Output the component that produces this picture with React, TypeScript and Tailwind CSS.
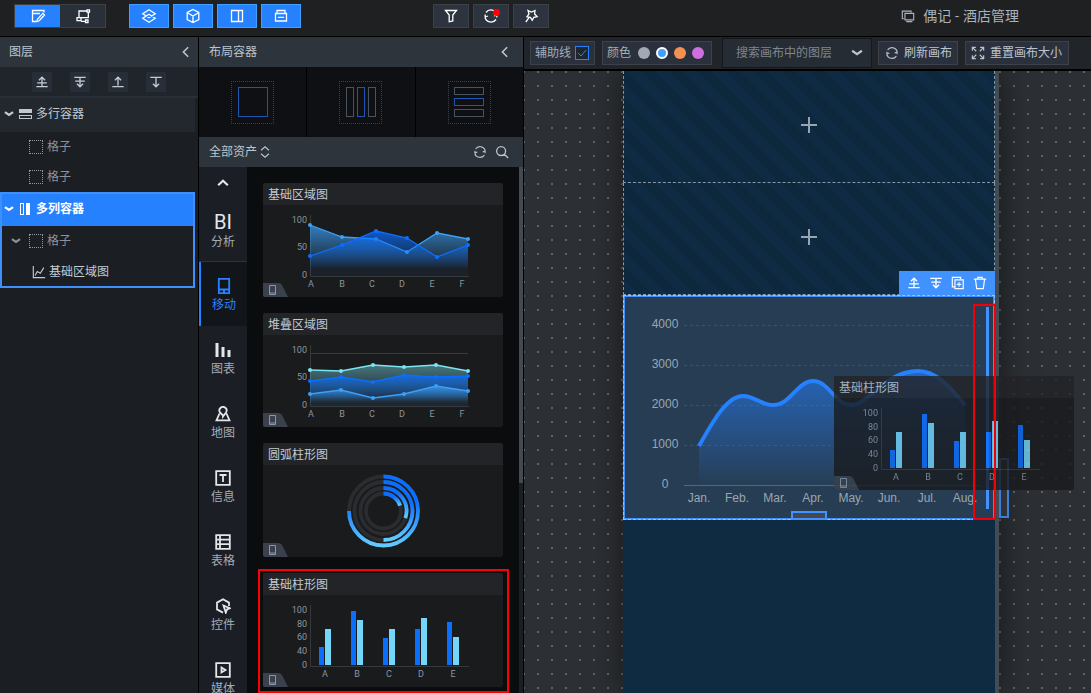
import React from "react";
import clsx from "clsx";

interface IconProps {
  d: string;
  size?: number;
  width?: number;
  className?: string;
}

const Icon: React.FC<IconProps> = ({ d, size = 16, width = 1.3, className }) => (
  <svg
    width={size}
    height={size}
    viewBox="0 0 16 16"
    fill="none"
    stroke="currentColor"
    strokeWidth={width}
    className={clsx("shrink-0", className)}
    aria-hidden="true"
  >
    <path d={d} />
  </svg>
);

const paths = {
  edit: "M14 4.5V2.5H2.5V13.5H6M2.5 5.5H10M14.5 7L9.2 12.8L6.8 13.6L7.4 11.2L12.8 5.4Z",
  flow: "M4 9.5V3H12M13.300 4V9.700H6M2 9.700H6V12.700H2ZM6 13.300H10.500M12 1.800H14.500V4.200H12ZM10.500 12H13V14.500H10.500Z",
  layers: "M8 1.8L14.200 5.700L8 9.700L1.800 5.700ZM8 6.300L14.200 10.300L8 14.200L1.800 10.300Z",
  cube: "M8 1.5L13.8 4.5V11.5L8 14.5L2.2 11.5V4.5ZM2.5 4.8L8 8L13.5 4.8M8 8V14.5",
  panel: "M2.5 2.5H13.5V13.5H2.5ZM9.5 2.5V13.5",
  drawer: "M4 5.500V2.500H12V5.500M2.500 5.500H13.500V13H2.500ZM5 9.300H11",
  filter: "M2.5 2.5H13.5L9.8 7V13L6.2 13.8V7Z",
  sync: "M14 6.5A6.2 6.2 0 0 0 3 4.5M2 9.5A6.2 6.2 0 0 0 13 11.5M2.2 9.5V6.5M13.8 6.5V9.5M2.2 9L5 8M13.8 7L11 8",
  wand: "M5 2.5L8.5 4L12 2.5L11.6 6L14.2 8.6L10.8 9.4L9.2 12.2L7.4 9.4L4 8.8L6 6ZM6 9.600L2.8 14",
  copy: "M3 11H1.5V2.5H11.5V4M4.5 5H14.5V12.5H4.5ZM6 14.5H13",
  moveUp: "M8 13V2.5M4.5 6L8 2.5L11.5 6M2.5 9H13.5M1.5 13.3H14.5",
  moveDown: "M8 3V13.5M4.5 10L8 13.5L11.5 10M1.5 2.7H14.5M2.5 7H13.5",
  toTop: "M8 12V2.5M4.5 6L8 2.5L11.5 6M1.5 13.3H14.5",
  toBottom: "M8 3V13.5M4.5 10L8 13.5L11.5 10M1.5 2.7H14.5",
  left: "M10.5 2.5L5 8L10.5 13.5",
  caret: "M1.500 5L8 9.500L14.500 5",
  up: "M2.5 10.5L8 5.5L13.5 10.5",
  sort: "M3.500 6L8 2L12.500 6M3.500 10L8 14L12.500 10",
  search: "M7 1.8A5 5 0 1 0 7 12A5 5 0 1 0 7 1.8M10.7 10.5L15 14.8",
  expand: "M1.5 5.5V1.5H5.5M1.5 1.5L6 6M10.5 1.5H14.5V5.5M14.5 1.5L10 6M1.5 10.5V14.5H5.5M1.5 14.5L6 10M14.5 10.5V14.5H10.5M14.5 14.5L10 10",
  plus: "M8 0V16M0 8H16",
  duplicate: "M4 12.5H1.5V1.5H11V3.5M4.5 4.5H14V14.5H4.5ZM9.2 7V12M6.7 9.5H11.7",
  trash: "M1 3.5H15M5.5 3.5V1.5H10.5V3.5M2.8 3.5L4.2 14.5H11.8L13.2 3.5",
  phone: "M2.800 .800H13.200V15.200H2.800ZM3 11.500H13M7 13.400H9",
  bars: "M2 15V1M8 15V5M14 15V8",
  map: "M8 9.5L5 6.5A3.6 3.6 0 1 1 11 6.5L8 10.5ZM4.5 7.5L1.5 14.3H14.5L11.5 7.5",
  info: "M1.2 1.2H14.8V14.8H1.2ZM4.5 5H11.5M8 5V12",
  table: "M1.2 1.2H14.8V14.8H1.2ZM5 1.2V14.8M1.2 5.7H14.8M1.2 10.2H14.8",
  widget: "M8 14.6L2 11.4V4.6L8 1.2L14 4.6V8M8.5 7.5L14.8 10.2L12 11.4L10.8 14.6Z",
  media: "M1.2 1.2H14.8V14.8H1.2ZM6.5 5.5L10.5 8L6.5 10.5Z",
  area: "M1.5 1V14.5H15M3.5 12L6 7.5L9.5 9.5L13.5 3",
};

const BLUE = "#0a6eff";
const SKY = "#3aa0f8";
const CYAN = "#74d6f8";

const toLine = (xs: number[], ys: number[]) => xs.map((x, i) => `${x},${ys[i]}`).join(" ");

interface AxisProps {
  xs: number[];
  names: string;
  ticks: [string, number][];
}

const Axis: React.FC<AxisProps> = ({ xs, names, ticks }) => (
  <g>
    <path d="M47.5 10V71.5H206" fill="none" stroke="#35383c" />
    <g fill="#8e959d" fontSize="9">
      {ticks.map(([label, y]) => (
        <text key={label} x="44" y={y + 3} textAnchor="end">
          {label}
        </text>
      ))}
      {names.split("").map((name, i) => (
        <text key={name} x={xs[i]} y="82" textAnchor="middle">
          {name}
        </text>
      ))}
    </g>
  </g>
);

interface SeriesProps {
  id: string;
  xs: number[];
  ys: number[];
  color: string;
  opacity?: number;
}

const Series: React.FC<SeriesProps> = ({ id, xs, ys, color, opacity = 0.75 }) => (
  <g>
    <linearGradient id={id} x1="0" x2="0" y1="0" y2="1">
      <stop offset="0" stopColor={color} stopOpacity={opacity} />
      <stop offset="0.85" stopColor={color} stopOpacity="0.03" />
    </linearGradient>
    <polygon points={`${xs[0]},71 ${toLine(xs, ys)} ${xs[xs.length - 1]},71`} fill={`url(#${id})`} />
    <polyline points={toLine(xs, ys)} fill="none" stroke={color} strokeWidth="1.3" />
    {xs.map((x, i) => (
      <circle key={x} cx={x} cy={ys[i]} r="2" fill={color} />
    ))}
  </g>
);

const nameXs = [48, 79, 109, 139, 169, 199];
const shortTicks: [string, number][] = [["100", 15], ["50", 42], ["0", 70]];

const AreaChart = () => {
  const xs = [47, 79, 113, 144, 174, 205];
  return (
    <>
      <Axis xs={nameXs} names="ABCDEF" ticks={shortTicks} />
      <Series id="area-sky" xs={xs} ys={[20, 32, 34, 47, 28, 34]} color={SKY} />
      <Series id="area-blue" xs={xs} ys={[51, 40, 26, 33, 52, 40]} color={BLUE} />
    </>
  );
};

const StackedChart = () => {
  const xs = [47, 78, 110, 141, 173, 205];
  return (
    <>
      <path d="M47 18.5H205" stroke="#35383c" />
      <Axis xs={nameXs} names="ABCDEF" ticks={shortTicks} />
      <Series id="stack-cyan" xs={xs} ys={[35, 36, 30, 32, 30, 36]} color="#7be4f4" opacity={0.45} />
      <Series id="stack-blue" xs={xs} ys={[46, 42, 47, 40, 42, 41]} color={BLUE} />
      <Series id="stack-sky" xs={xs} ys={[59, 55, 63, 59, 51, 56]} color={SKY} />
    </>
  );
};

const rings = [
  { r: 34.5, share: 0.75 },
  { r: 29, share: 0.5 },
  { r: 23, share: 0.3 },
  { r: 17.5, share: 0.2 },
];

const RingChart = () => (
  <g transform="translate(120.5 46)" fill="none" strokeWidth="3.8">
    {rings.map(({ r, share }) => {
      const a = share * Math.PI * 2;
      const x = r * Math.sin(a);
      const y = -r * Math.cos(a);
      return (
        <g key={r}>
          <linearGradient
            id={`ring-${r}`}
            gradientUnits="userSpaceOnUse"
            x1="0"
            x2="0"
            y1={share < 0.5 ? -r * 0.8 : -r * 0.3}
            y2={share > 0.5 ? r : y}
          >
            <stop offset="0" stopColor={BLUE} />
            <stop offset="1" stopColor="#62ccff" />
          </linearGradient>
          <circle r={r} stroke="#2b2c2f" />
          <path d={`M0 ${-r}A${r} ${r} 0 ${share > 0.5 ? 1 : 0} 1 ${x} ${y}`} stroke={`url(#ring-${r})`} />
        </g>
      );
    })}
  </g>
);

const bars = [
  [52, 34],
  [16, 25],
  [43, 34],
  [34, 23],
  [27, 42],
];

const BarChart = () => (
  <>
    <Axis
      xs={[62, 94, 126, 158, 190]}
      names="ABCDE"
      ticks={[["100", 15], ["80", 29], ["60", 42], ["40", 56], ["0", 70]]}
    />
    {bars.map(([a, b], i) => (
      <g key={i}>
        <rect x={56 + i * 32} y={a} width="5" height={70 - a} fill={BLUE} />
        <rect x={62 + i * 32} y={b} width="6" height={70 - b} fill={CYAN} />
      </g>
    ))}
  </>
);

const Card: React.FC<{ title: string; children: React.ReactNode }> = ({ title, children }) => (
  <article className="w-[240px] rounded-xs overflow-hidden bg-[#1a1b1d]">
    <h3 className="h-[22px] px-[5px] leading-[24px] bg-[#232427] text-[#c2cad2]">{title}</h3>
    <svg viewBox="0 0 240 92" className="block w-full" fontFamily="Roboto, sans-serif">
      {children}
      <path d="M0 78H15Q18 78 19.5 81L25 92H0Z" fill="#3a414c" />
      <path d="M6.5 80.5H12.5V89.5H6.5ZM6.5 88H12.5" fill="none" stroke="#8b97a8" />
    </svg>
  </article>
);

interface ToolButtonProps {
  label: string;
  d: string;
  className: string;
  children?: React.ReactNode;
}

const ToolButton: React.FC<ToolButtonProps> = ({ label, d, className, children }) => (
  <button aria-label={label} className={clsx("flex h-6 items-center justify-center text-white", className)}>
    <Icon d={d} />
    {children}
  </button>
);

const Header = () => (
  <header className="flex h-[37px] shrink-0 items-start border-b border-black bg-[#1e2022] pt-1 pl-[14px]">
    <div className="flex border border-[#3c4047]">
      <button aria-label="编辑" className="flex h-[22px] w-[45px] items-center justify-center bg-[#2681ff] text-white">
        <Icon d={paths.edit} />
      </button>
      <button aria-label="蓝图" className="flex h-[22px] w-[45px] items-center justify-center bg-[#2a303a] text-white">
        <Icon d={paths.flow} />
      </button>
    </div>
    <div className="ml-[23px] flex gap-1">
      <ToolButton label="图层" d={paths.layers} className="w-10 border border-[#409fff] bg-[#2681ff]" />
      <ToolButton label="组件" d={paths.cube} className="w-10 border border-[#409fff] bg-[#2681ff]" />
      <ToolButton label="右侧面板" d={paths.panel} className="w-10 border border-[#409fff] bg-[#2681ff]" />
      <ToolButton label="工具箱" d={paths.drawer} className="w-10 border border-[#409fff] bg-[#2681ff]" />
    </div>
    <div className="ml-[132px] flex gap-1">
      <ToolButton label="过滤器" d={paths.filter} className="w-9 border border-[#3c4047] bg-[#2d3440]" />
      <ToolButton label="同步" d={paths.sync} className="relative w-9 border border-[#3c4047] bg-[#2d3440]">
        <span className="absolute top-1 right-2 size-[7px] rounded-full bg-[#ff0000]" />
      </ToolButton>
      <ToolButton label="美化" d={paths.wand} className="w-9 border border-[#3c4047] bg-[#2d3440]" />
    </div>
    <h1 className="mr-[72px] ml-auto flex h-6 items-center gap-2 text-sm text-[#a9b3bd]">
      <Icon d={paths.copy} size={14} />
      偶记 - 酒店管理
    </h1>
  </header>
);

const Cell: React.FC<{ caret?: boolean }> = ({ caret }) => (
  <div className="flex h-[30px] items-center text-[#8a929b]">
    <span className="flex w-[29px] justify-end pr-2">{caret && <Icon d={paths.caret} size={10} width={3.5} />}</span>
    <span className="mr-1 size-[14px] border border-dotted border-[#9299a1]" />
    格子
  </div>
);

const LayerPanel = () => (
  <aside className="flex w-[199px] shrink-0 flex-col border-r border-black bg-[#1b1f24]">
    <div className="flex h-[30px] shrink-0 items-center justify-between bg-[#2d343b] pr-[5px] pl-[9px] text-[#bcc5ce]">
      <h2>图层</h2>
      <button aria-label="收起图层">
        <Icon d={paths.left} size={14} width={1.8} />
      </button>
    </div>
    <div className="flex h-[31px] shrink-0 items-start gap-[18px] border-b-2 border-[#292f38] bg-[#20242b] pt-[5px] pl-8 text-[#c3cbd3]">
      {[
        ["上移", paths.moveUp],
        ["下移", paths.moveDown],
        ["置顶", paths.toTop],
        ["置底", paths.toBottom],
      ].map(([label, d]) => (
        <button key={label} aria-label={label} className="flex size-5 items-center justify-center bg-[#282e38]">
          <Icon d={d} size={14} width={1.5} />
        </button>
      ))}
    </div>
    <div className="pr-[3px]">
      <div className="flex h-[34px] items-center bg-[#22282e] pb-[2px] pl-1 text-[#c3cbd3]">
        <Icon d={paths.caret} size={10} width={3.5} />
        <span className="mr-1 ml-[5px] flex w-[13px] flex-col gap-[2px]">
          <span className="h-1 bg-[#bfc8d1]" />
          <span className="h-1 border border-[#bfc8d1]" />
        </span>
        多行容器
      </div>
      <Cell />
      <Cell />
      <div className="border-2 border-[#3e90ff]">
        <div className="flex h-8 items-center bg-[#2681ff] pb-[2px] pl-[2px] font-bold text-white">
          <Icon d={paths.caret} size={10} width={3.5} />
          <span className="mr-[6px] ml-[6px] flex h-3 w-[10px] gap-[2px]">
            <span className="w-1 border border-white" />
            <span className="w-1 bg-white" />
          </span>
          多列容器
        </div>
        <div className="-ml-[2px]">
          <Cell caret />
          <div className="flex h-[30px] items-center gap-[3px] pt-[2px] pl-8 text-[#c3cbd3]">
            <Icon d={paths.area} size={14} />
            基础区域图
          </div>
        </div>
      </div>
    </div>
  </aside>
);

const categories = [
  { label: "移动", d: paths.phone },
  { label: "图表", d: paths.bars, width: 3 },
  { label: "地图", d: paths.map },
  { label: "信息", d: paths.info },
  { label: "表格", d: paths.table },
  { label: "控件", d: paths.widget },
  { label: "媒体", d: paths.media },
];

const tile = "flex h-[70px] items-center justify-center bg-[#0f1013]";
const tileBox = "flex size-[43px] items-center justify-center gap-[3px] border border-dotted border-[#3d4145]";

const AssetPanel = () => (
  <section className="flex w-[325px] shrink-0 flex-col border-r border-black bg-[#0b0c0e]">
    <div className="flex h-[30px] shrink-0 items-center justify-between bg-[#2d343b] pr-[11px] pl-[10px] text-[#bcc5ce]">
      <h2>布局容器</h2>
      <button aria-label="收起布局容器">
        <Icon d={paths.left} size={14} width={1.8} />
      </button>
    </div>
    <div className="grid shrink-0 grid-cols-3 gap-px bg-black">
      <button aria-label="自由容器" className={tile}>
        <span className={tileBox}>
          <span className="size-[30px] border border-[#1d56b0]" />
        </span>
      </button>
      <button aria-label="多列容器" className={tile}>
        <span className={tileBox}>
          <span className="h-[30px] w-2 border border-[#49535d]" />
          <span className="h-[30px] w-2 border border-[#1d56b0]" />
          <span className="h-[30px] w-2 border border-[#49535d]" />
        </span>
      </button>
      <button aria-label="多行容器" className={tile}>
        <span className={clsx(tileBox, "flex-col")}>
          <span className="h-2 w-[30px] border border-[#49535d]" />
          <span className="h-2 w-[30px] border border-[#1d56b0]" />
          <span className="h-2 w-[30px] border border-[#49535d]" />
        </span>
      </button>
    </div>
    <div className="flex h-[30px] shrink-0 items-center bg-[#2d343b] pr-[14px] pl-[10px] text-[#bcc5ce]">
      <button className="mr-auto flex items-center gap-px">
        全部资产
        <Icon d={paths.sort} size={14} />
      </button>
      <button aria-label="刷新资产" className="mr-2">
        <Icon d={paths.sync} size={14} />
      </button>
      <button aria-label="搜索资产">
        <Icon d={paths.search} size={14} width={1.5} />
      </button>
    </div>
    <div className="flex min-h-0 flex-1 overflow-hidden">
      <nav className="flex w-12 shrink-0 flex-col overflow-hidden bg-[#1b1f25] text-[#a4acb5]">
        <button aria-label="向上滚动" className="flex h-[31px] shrink-0 items-center justify-center text-[#e4e7ea]">
          <Icon d={paths.up} size={14} width={2.5} />
        </button>
        <button className="flex h-16 shrink-0 flex-col items-center justify-center border-b border-[#2d343b] leading-[18px]">
          <span className="font-['Roboto',sans-serif] text-xl leading-6 text-[#e4e7ea]">BI</span>
          <span className="leading-4">分析</span>
        </button>
        {categories.map(({ label, d, width }, i) => (
          <button
            key={label}
            className={clsx(
              "flex h-16 shrink-0 flex-col items-center justify-center gap-[2px] pt-[3px] leading-[18px]",
              i === 0 && "border-l-2 border-[#2681ff] bg-[#12151a] text-[#2681ff]"
            )}
          >
            <Icon d={d} size={16} width={width || 1.8} className={i === 0 ? "" : "text-[#e4e7ea]"} />
            {label}
          </button>
        ))}
      </nav>
      <div className="flex-1 overflow-hidden px-4 pt-4">
        <div className="flex flex-col gap-4">
          <Card title="基础区域图">
            <AreaChart />
          </Card>
          <Card title="堆叠区域图">
            <StackedChart />
          </Card>
          <Card title="圆弧柱形图">
            <RingChart />
          </Card>
          <div className="relative">
            <Card title="基础柱形图">
              <BarChart />
            </Card>
            <span className="absolute -top-1 -right-[6px] -bottom-[6px] -left-[5px] border-2 border-[#ff0000]" />
          </div>
        </div>
      </div>
      <div className="w-1 bg-[#1b1f25]">
        <div className="h-[60%] bg-[#434a54]" />
      </div>
    </div>
  </section>
);

const box = "flex h-[24px] items-center border border-[#3d4149] bg-[#2b313c]";

const swatches = [
  { name: "灰色", color: "bg-[#a3a8b3]" },
  { name: "蓝色", color: "bg-[#409fff] border-2 border-white" },
  { name: "橙色", color: "bg-[#f59150]" },
  { name: "紫色", color: "bg-[#cb70dc]" },
];

const CanvasToolbar = () => (
  <div className="flex h-[34px] shrink-0 items-center border-b-2 border-black bg-[#212529] pl-[6px] text-[#a4acb5]">
    <label className={clsx(box, "w-[65px] gap-1 pl-1")}>
      辅助线
      <span className="relative flex">
        <input type="checkbox" defaultChecked className="size-[14px] appearance-none border border-[#2681ff] bg-[#20262e]" />
        <svg viewBox="0 0 14 14" className="pointer-events-none absolute inset-0 size-[14px]" fill="none" stroke="#2681ff">
          <path d="M3 7L6 10L11 4" />
        </svg>
      </span>
    </label>
    <fieldset className={clsx(box, "ml-[7px] w-[110px] gap-[6px] pl-1")}>
      <span className="mr-px">颜色</span>
      {swatches.map(({ name, color }) => (
        <input
          key={name}
          type="radio"
          name="guide-color"
          aria-label={name}
          defaultChecked={name === "蓝色"}
          className={clsx("size-3 appearance-none rounded-full", color)}
        />
      ))}
    </fieldset>
    <div className="ml-[10px] flex h-[30px] w-[150px] items-center border border-[#14181c] bg-[#262c33] pr-2 pl-[13px]">
      <input
        aria-label="搜索画布中的图层"
        placeholder="搜索画布中的图层"
        className="min-w-0 flex-1 bg-transparent outline-none placeholder:text-[#7f868e]"
      />
      <Icon d={paths.caret} size={12} width={3} className="text-[#bcc5ce]" />
    </div>
    <button className={clsx(box, "ml-[6px] w-[80px] gap-[5px] pl-[6px] text-[#bcc5ce]")}>
      <Icon d={paths.sync} size={14} />
      刷新画布
    </button>
    <button className={clsx(box, "ml-[7px] w-[104px] gap-[5px] pl-[5px] text-[#bcc5ce]")}>
      <Icon d={paths.expand} size={14} />
      重置画布大小
    </button>
  </div>
);

const months = ["Jan.", "Feb.", "Mar.", "Apr.", "May.", "Jun.", "Jul.", "Aug."];
const curve =
  "M76 151C90 126 104 101 120 101C132 101 138 110 150 110C168 110 174 86 190 86C206 86 212 110 228 110C246 110 262 76 295 76C315 76 330 96 342 110";

const MonthChart = () => (
  <svg viewBox="0 0 372 225" className="block w-full" fontFamily="'Liberation Sans', Arial, sans-serif" fontSize="12">
    <linearGradient id="month-fill" x1="0" x2="0" y1="0" y2="1">
      <stop offset="0" stopColor="#2681ff" stopOpacity="0.6" />
      <stop offset="1" stopColor="#2681ff" stopOpacity="0.02" />
    </linearGradient>
    <path d="M61 30.5H357M61 70.5H357M61 110.5H357M61 150.5H357" stroke="#3d5267" strokeDasharray="3 3" />
    <path d="M61 190.5H357" stroke="#54677a" />
    <path d={`${curve}V190H76Z`} fill="url(#month-fill)" />
    <path d={curve} fill="none" stroke="#2681ff" strokeWidth="4" />
    <g fill="#9aa6b2" textAnchor="middle">
      {[4000, 3000, 2000, 1000, 0].map((n, i) => (
        <text key={n} x="42" y={33 + i * 40}>
          {n}
        </text>
      ))}
      {months.map((m, i) => (
        <text key={m} x={76 + i * 38} y="207">
          {m}
        </text>
      ))}
    </g>
  </svg>
);

const EmptyCell = () => (
  <button
    aria-label="添加组件"
    className="flex h-28 w-full items-center justify-center border-x border-b border-dashed border-[#8596a6] bg-[repeating-linear-gradient(45deg,#0f2b43_0px,#0f2b43_10px,#0d273c_10px,#0d273c_20px)] pb-[3px] text-[#97a5b2]"
  >
    <Icon d={paths.plus} width={2} />
  </button>
);

const Canvas = () => (
  <main className="flex min-w-0 flex-1 flex-col">
    <CanvasToolbar />
    <div className="flex min-h-0 flex-1 overflow-hidden bg-[linear-gradient(90deg,#2c2f33_12px,transparent_12px),linear-gradient(#2c2f33_12px,#5c6469_12px)] bg-[size:14px_14px] bg-[position:1px_2px] pl-[99px]">
      <div className="w-[376px] shrink-0 border-r-4 border-[#434b54] bg-[#0f2b42] shadow-[0_0_30px_rgba(0,0,0,0.5)]">
        <EmptyCell />
        <EmptyCell />
        <div className="relative bg-[#263d53]">
          <MonthChart />
          <div className="absolute inset-0 border-2 border-[#4191ff]" />
          <div className="absolute inset-0 border border-dashed border-[#9cc4f5]" />
          <div className="absolute right-0 bottom-full flex h-6 w-24 items-center justify-around bg-[#4191ff] px-1 text-white">
            <button aria-label="上移">
              <Icon d={paths.moveUp} size={14} width={1.5} />
            </button>
            <button aria-label="下移">
              <Icon d={paths.moveDown} size={14} width={1.5} />
            </button>
            <button aria-label="复制">
              <Icon d={paths.duplicate} size={14} />
            </button>
            <button aria-label="删除">
              <Icon d={paths.trash} size={14} />
            </button>
          </div>
          <span className="absolute bottom-0 left-[168px] h-[9px] w-9 border-2 border-[#4191ff] bg-[#45484c]" />
          <span className="absolute -right-[14px] bottom-[2px] h-[60px] w-[10px] border-2 border-[#3b7ed8] bg-[#303236]" />
          <span className="absolute top-3 right-[6px] h-[202px] w-[3px] bg-[#4191ff]" />
          <div className="absolute top-[81px] left-[211px] opacity-80">
            <Card title="基础柱形图">
              <BarChart />
            </Card>
          </div>
          <span className="absolute top-[9px] -right-px bottom-0 w-[23px] border-2 border-[#f0000a]" />
        </div>
      </div>
    </div>
  </main>
);

export default function App() {
  return (
    <div className="flex h-screen flex-col overflow-hidden bg-[#1b1f24] font-['Open_Sans','Noto_Sans_CJK_SC',sans-serif] text-xs">
      <Header />
      <div className="flex min-h-0 flex-1">
        <LayerPanel />
        <AssetPanel />
        <Canvas />
      </div>
    </div>
  );
}
